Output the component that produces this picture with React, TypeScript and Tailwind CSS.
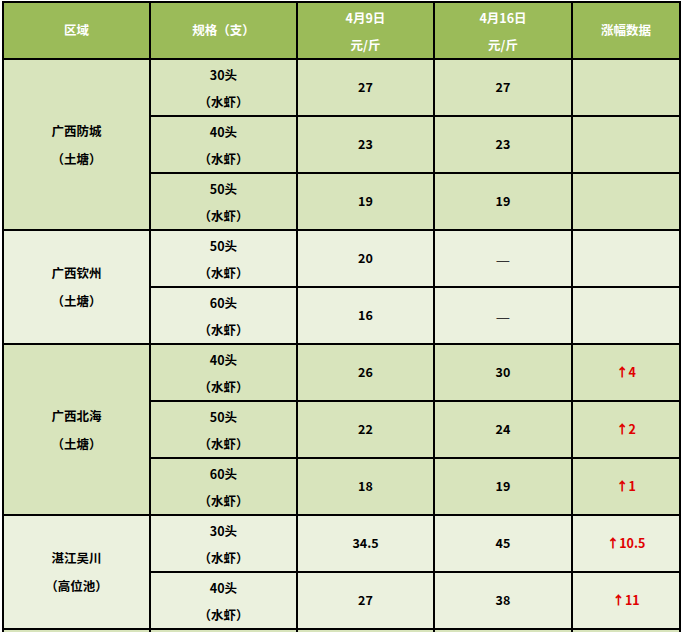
import React from 'react';

type Row = { spec: string; d1: string; d2: string; rise?: string };
type Group = { region: string; sub: string; bg: string; rows: Row[] };

const groups: Group[] = [
  {
    region: '广西防城',
    sub: '（土塘）',
    bg: 'bg-[#d8e4bc]',
    rows: [
      { spec: '30头', d1: '27', d2: '27' },
      { spec: '40头', d1: '23', d2: '23' },
      { spec: '50头', d1: '19', d2: '19' },
    ],
  },
  {
    region: '广西钦州',
    sub: '（土塘）',
    bg: 'bg-[#ebf1de]',
    rows: [
      { spec: '50头', d1: '20', d2: '—' },
      { spec: '60头', d1: '16', d2: '—' },
    ],
  },
  {
    region: '广西北海',
    sub: '（土塘）',
    bg: 'bg-[#d8e4bc]',
    rows: [
      { spec: '40头', d1: '26', d2: '30', rise: '4' },
      { spec: '50头', d1: '22', d2: '24', rise: '2' },
      { spec: '60头', d1: '18', d2: '19', rise: '1' },
    ],
  },
  {
    region: '湛江吴川',
    sub: '（高位池）',
    bg: 'bg-[#ebf1de]',
    rows: [
      { spec: '30头', d1: '34.5', d2: '45', rise: '10.5' },
      { spec: '40头', d1: '27', d2: '38', rise: '11' },
    ],
  },
];

const cell = 'border-2 border-black text-center align-middle p-0';

// the dash cells use a long thin stroke in the reference
const Value: React.FC<{ v: string }> = ({ v }) =>
  v === '—' ? <span className="font-normal text-[16px] text-[#333]">—</span> : <>{v}</>;

const App: React.FC = () => {
  return (
    <div
      className="w-[682px] h-[632px] overflow-hidden bg-white pt-px pl-[2px]"
      style={{ fontFamily: '"Noto Sans CJK SC", "DejaVu Sans", sans-serif' }}
    >
      <table className="table-fixed border-collapse w-[677px] text-[12.5px] font-bold text-black">
        <colgroup>
          <col className="w-[147px]" />
          <col className="w-[147px]" />
          <col className="w-[137px]" />
          <col className="w-[138px]" />
          <col className="w-[108px]" />
        </colgroup>
        <thead>
          <tr className="h-[57px] bg-[#9bbb59] text-white">
            <th className={cell}>区域</th>
            <th className={cell}>规格（支）</th>
            <th className={cell}>
              <div className="leading-[27px]">4月9日</div>
              <div className="leading-[27px]">元/斤</div>
            </th>
            <th className={cell}>
              <div className="leading-[27px]">4月16日</div>
              <div className="leading-[27px]">元/斤</div>
            </th>
            <th className={cell}>涨幅数据</th>
          </tr>
        </thead>
        <tbody>
          {groups.map((g) =>
            g.rows.map((r, i) => (
              <tr key={g.region + i} className={`h-[57px] ${g.bg}`}>
                {i === 0 && (
                  <td className={cell} rowSpan={g.rows.length}>
                    <div className="leading-[28px]">{g.region}</div>
                    <div className="leading-[28px]">{g.sub}</div>
                  </td>
                )}
                <td className={cell}>
                  <div className="leading-[27px]">{r.spec}</div>
                  <div className="leading-[27px]">（水虾）</div>
                </td>
                <td className={cell}>
                  <Value v={r.d1} />
                </td>
                <td className={cell}>
                  <Value v={r.d2} />
                </td>
                <td className={`${cell} text-[#e00000]`}>
                  {r.rise && (
                    <span>
                      <span className="font-black">↑</span>
                      {r.rise}
                    </span>
                  )}
                </td>
              </tr>
            ))
          )}
          <tr className="h-[57px] bg-[#d8e4bc]">
            <td className={cell}></td>
            <td className={cell}></td>
            <td className={cell}></td>
            <td className={cell}></td>
            <td className={cell}></td>
          </tr>
        </tbody>
      </table>
    </div>
  );
};

export default App;
